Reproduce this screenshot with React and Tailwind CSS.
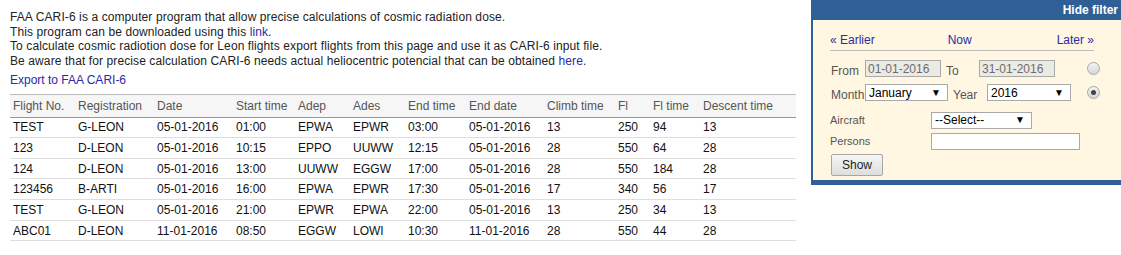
import React from "react";

const rows = [
  ["TEST", "G-LEON", "05-01-2016", "01:00", "EPWA", "EPWR", "03:00", "05-01-2016", "13", "250", "94", "13"],
  ["123", "D-LEON", "05-01-2016", "10:15", "EPPO", "UUWW", "12:15", "05-01-2016", "28", "550", "64", "28"],
  ["124", "D-LEON", "05-01-2016", "13:00", "UUWW", "EGGW", "17:00", "05-01-2016", "28", "550", "184", "28"],
  ["123456", "B-ARTI", "05-01-2016", "16:00", "EPWA", "EPWR", "17:30", "05-01-2016", "17", "340", "56", "17"],
  ["TEST", "G-LEON", "05-01-2016", "21:00", "EPWR", "EPWA", "22:00", "05-01-2016", "13", "250", "34", "13"],
  ["ABC01", "D-LEON", "11-01-2016", "08:50", "EGGW", "LOWI", "10:30", "11-01-2016", "28", "550", "44", "28"],
];

const headers = [
  "Flight No.", "Registration", "Date", "Start time", "Adep", "Ades",
  "End time", "End date", "Climb time", "Fl", "Fl time", "Descent time",
];

const colWidths = [
  "w-[65px]", "w-[79px]", "w-[79px]", "w-[62px]", "w-[55px]", "w-[55px]",
  "w-[61px]", "w-[78px]", "w-[71px]", "w-[35px]", "w-[50px]", "w-[96px]",
];

function FakeSelect({ value, className }) {
  return (
    <div className={`flex h-[17px] items-center justify-between border border-[#a9a9a9] bg-white pl-[3px] pr-[6px] text-[12px] leading-none text-black ${className}`}>
      <span>{value}</span>
      <span className="text-[10px]">▼</span>
    </div>
  );
}

function Radio({ checked }) {
  return (
    <span className="flex h-[13px] w-[13px] items-center justify-center rounded-full border border-[#a8a8a8] bg-gradient-to-b from-[#f4f4f4] to-[#d6d6d6]">
      {checked && <span className="h-[5px] w-[5px] rounded-full bg-[#444]" />}
    </span>
  );
}

export default function App() {
  return (
    <div className="flex min-h-[255px] bg-white text-[12px] text-[#222]" style={{ fontFamily: '"Liberation Sans", Arial, sans-serif' }}>
      {/* Main content */}
      <div className="w-[796px] shrink-0 pl-[10px] pt-[10px]">
        <p className="leading-[14.5px] tracking-[0.1px]">
          FAA CARI-6 is a computer program that allow precise calculations of cosmic radiation dose.
          <br />
          This program can be downloaded using this <a href="#" className="text-[#2a2aa8]">link</a>.
          <br />
          To calculate cosmic radiotion dose for Leon flights export flights from this page and use it as CARI-6 input file.
          <br />
          Be aware that for precise calculation CARI-6 needs actual heliocentric potencial that can be obtained{" "}
          <a href="#" className="text-[#2a2aa8]">here</a>.
        </p>
        <a href="#" className="mt-[5px] block leading-[14.5px] text-[#2a2aa8]">
          Export to FAA CARI-6
        </a>

        <table className="mt-[6px] w-[786px] table-fixed border-collapse border-t border-[#bdbdbd]">
          <colgroup>
            {colWidths.map((w, i) => (
              <col key={i} className={w} />
            ))}
          </colgroup>
          <thead>
            <tr className="h-[23px] border-b border-[#7f9fc2] bg-[#f6f6f6]">
              {headers.map((h) => (
                <th key={h} className="pl-[3px] text-left font-normal text-[#555]">
                  {h}
                </th>
              ))}
            </tr>
          </thead>
          <tbody>
            {rows.map((r, i) => (
              <tr key={i} className="h-[20.67px] border-b border-[#dedede]">
                {r.map((c, j) => (
                  <td key={j} className="pl-[3px] text-[#111]">
                    {c}
                  </td>
                ))}
              </tr>
            ))}
          </tbody>
        </table>
      </div>

      {/* Filter panel */}
      <div className="ml-[15px] h-[185px] w-[310px] shrink-0 bg-[#2f5f96] pb-[5px] pl-[2px]">
        <div className="flex h-[20px] items-center justify-end pr-[3px] text-[12px] font-bold text-white">
          Hide filter
        </div>
        <div className="h-[160px] bg-[#fff7e1] pl-[17px] pt-[13px]">
          <div className="flex w-[264px] justify-between border-b border-[#bbb] pb-[3px] text-[12px] leading-[14px] text-[#2a2aa8]">
            <a href="#">« Earlier</a>
            <a href="#" className="mr-[12px]">Now</a>
            <a href="#">Later »</a>
          </div>

          <div className="mt-[9px] flex h-[17px] items-center">
            <span className="w-[35px] pl-[1px] pt-[5px] text-[#555]">From</span>
            <div className="flex h-[17px] w-[76px] items-center border border-[#a9a9a9] bg-[#ebebe4] pl-[2px] text-[12px] text-[#6d6d6d]">
              01-01-2016
            </div>
            <span className="w-[38px] pl-[5px] pt-[5px] text-[#555]">To</span>
            <div className="flex h-[17px] w-[76px] items-center border border-[#a9a9a9] bg-[#ebebe4] pl-[2px] text-[12px] text-[#6d6d6d]">
              31-01-2016
            </div>
            <span className="ml-[32px]">
              <Radio />
            </span>
          </div>

          <div className="mt-[7px] flex h-[17px] items-center">
            <span className="w-[35px] pl-[1px] pt-[5px] text-[#555]">Month</span>
            <FakeSelect value="January" className="w-[83px]" />
            <span className="w-[39px] pl-[5px] pt-[5px] text-[#555]">Year</span>
            <FakeSelect value="2016" className="w-[84px]" />
            <span className="ml-[16px]">
              <Radio checked />
            </span>
          </div>

          <div className="mt-[11px] flex h-[16px] items-center">
            <span className="w-[101px] text-[11px] text-[#555]">Aircraft</span>
            <FakeSelect value="--Select--" className="h-[16px] w-[101px]" />
          </div>

          <div className="mt-[5px] flex h-[17px] items-center">
            <span className="w-[101px] text-[11px] text-[#555]">Persons</span>
            <div className="h-[17px] w-[149px] border border-[#a9a9a9] bg-white" />
          </div>

          <button className="mt-[4px] ml-[1px] h-[22px] w-[52px] rounded-[2px] border border-[#a6a6a6] bg-gradient-to-b from-[#f6f6f6] to-[#dedede] text-[12px] text-[#222]">
            Show
          </button>
        </div>
      </div>
    </div>
  );
}
